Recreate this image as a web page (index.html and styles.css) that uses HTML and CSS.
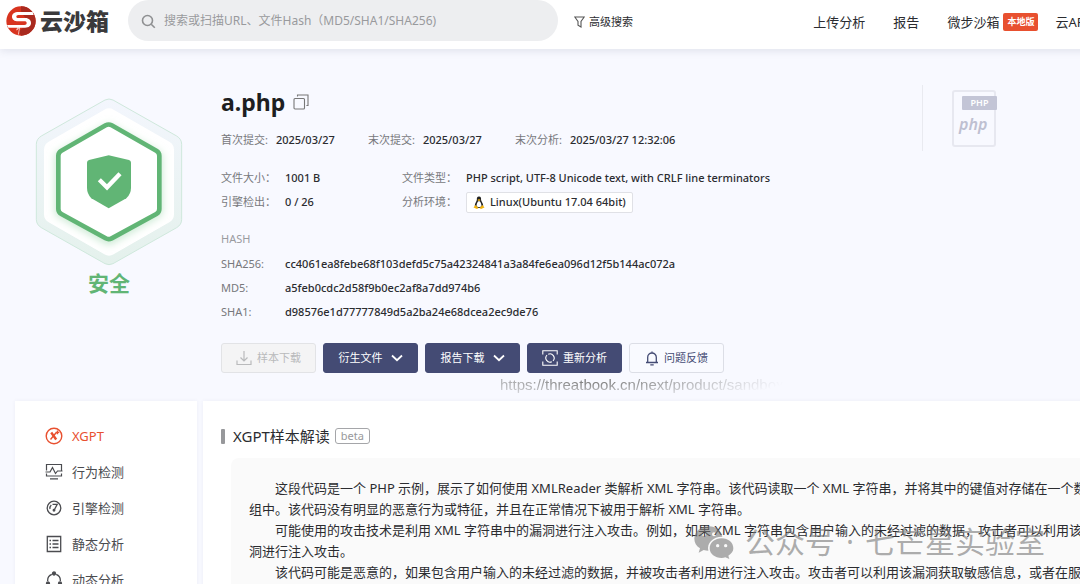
FILE: index.html
```html
<!DOCTYPE html>
<html lang="zh-CN">
<head>
  <meta charset="UTF-8" />
  <meta name="viewport" content="width=device-width, initial-scale=1.0"/>
  <title>a.php - 云沙箱</title>
  <link rel="stylesheet" href="styles.css">
</head>
<body>
  <div class="page">
    <header class="header">
      <a class="logo" href="#">
        <svg width="30" height="30" viewBox="0 0 90 90">
          <circle cx="45" cy="45" r="44" fill="#d8341f"/>
          <path d="M45 1a44 44 0 0 1 0 88l-6-14 20-16 8-14-14-16-8-14z" fill="#a92a1f"/>
          <path d="M80 18H38c-13 0-20 6-20 14s7 14 19 14h18c5 0 7 2 7 5s-2 6-7 6H3l4 8h50c12 0 18-6 18-14s-6-15-17-15H37c-4 0-6-2-6-4s2-5 6-5h46z" fill="#fff"/>
          <path d="M38 59l-6 13 9-8-4 22" fill="none" stroke="#fff" stroke-width="2"/>
        </svg>
        <span>云沙箱</span>
      </a>
      <form class="search">
        <svg width="15" height="15" viewBox="0 0 15 15" fill="none" stroke="#8f9092" stroke-width="1.6">
          <circle cx="6.500" cy="6.500" r="5"/><path d="M10.200 10.200l3.600 3.600"/>
        </svg>
        <input type="text" aria-label="搜索" placeholder="搜索或扫描URL、文件Hash（MD5/SHA1/SHA256)">
      </form>
      <a class="advanced" href="#">
        <svg width="11" height="12" viewBox="0 0 11 12" fill="none" stroke="#555" stroke-width="1.1">
          <path d="M.8 1h9.400L7 5.400V11L4 9.200V5.400z"/>
        </svg>
        高级搜索
      </a>
      <nav class="nav">
        <a href="#">上传分析</a>
        <a href="#">报告</a>
        <a href="#">微步沙箱<span class="tag">本地版</span></a>
        <a class="nav-api" href="#">云API</a>
      </nav>
    </header>

    <section class="summary">
      <div class="verdict">
        <svg width="178" height="185" viewBox="0 0 534 555">
          <defs>
            <linearGradient id="ring" x1="0" y1="0" x2="0" y2="1">
              <stop offset="0" stop-color="#f3f6fd"/><stop offset="1" stop-color="#e4f1ec"/>
            </linearGradient>
            <filter id="blur" x="-20%" y="-20%" width="140%" height="140%"><feGaussianBlur stdDeviation="13"/></filter>
          </defs>
          <path d="M255 45q12-6 24 0l191 108q15 9 15 25v225q0 16-15 25L279 536q-12 6-24 0L64 428q-15-9-15-25V178q0-16 15-25z" fill="url(#ring)" stroke="#cfe8dc" stroke-width="3"/>
          <path d="M253 74q14-8 28 0l167 96q14 8 14 24v194q0 16-14 24l-167 96q-14 8-28 0L86 412q-14-8-14-24V194q0-16 14-24z" fill="#fff"/>
          <path d="M266 130l148 83v170l-148 84-148-84V213z" fill="none" stroke="#b9e2c4" stroke-width="20" filter="url(#blur)"/>
          <path d="M257 121q9-5 18 0l134 76q9 5 9 15v160q0 10-9 15l-134 73q-9 5-18 0l-133-73q-9-5-9-15V212q0-10 9-15z" fill="#fff" stroke="#61b575" stroke-width="14"/>
          <path d="M266 211l61 14q6 2 6 8v75q0 18-14 32l-53 30-52-30q-13-14-13-32v-75q0-6 6-8z" fill="#61b575"/>
          <path d="M238 284l23 23 39-41" fill="none" stroke="#fff" stroke-width="13"/>
        </svg>
        <strong class="verdict-text">安全</strong>
      </div>

      <div class="info">
        <h1 class="file-name">a.php
          <button class="copy" type="button" aria-label="复制">
            <svg width="16" height="16" viewBox="0 0 16 16" fill="none" stroke="#777" stroke-width="1.1">
              <rect x="1" y="4.500" width="10.500" height="10.500" rx="1"/><path d="M4.500 2.600V1H15v10.500h-1.600"/>
            </svg>
          </button>
        </h1>
        <dl class="dates">
          <div><dt>首次提交:</dt><dd>2025/03/27</dd></div>
          <div><dt>末次提交:</dt><dd>2025/03/27</dd></div>
          <div><dt>末次分析:</dt><dd>2025/03/27 12:32:06</dd></div>
        </dl>
        <dl class="details">
          <dt>文件大小：</dt><dd>1001 B</dd>
          <dt>文件类型：</dt><dd>PHP script, UTF-8 Unicode text, with CRLF line terminators</dd>
          <dt>引擎检出：</dt><dd>0 / 26</dd>
          <dt>分析环境：</dt>
          <dd>
            <span class="env">
              <svg width="12" height="13" viewBox="0 0 24 26">
                <path d="M12 1c-4 0-4.500 3-4.300 6.500C7.500 11 3.500 14 3.500 20l4 4h9l4-4c0-6-4.200-9-4.400-12.500C16.300 4 16 1 12 1z" fill="#222"/>
                <path d="M12 10c-2.500 0-5 6-5 10 1 3 9 3 10 0 0-4-2.500-10-5-10z" fill="#fff"/>
                <path d="M9 8l3-2 3 2-3 2.500zM1 23l4-5 6 6-3 2zM23 23l-4-5-6 6 3 2z" fill="#f2b20c"/>
              </svg>
              Linux(Ubuntu 17.04 64bit)
            </span>
          </dd>
        </dl>
        <h2 class="hash-title">HASH</h2>
        <dl class="details hashes">
          <dt>SHA256:</dt><dd>cc4061ea8febe68f103defd5c75a42324841a3a84fe6ea096d12f5b144ac072a</dd>
          <dt>MD5:</dt><dd>a5feb0cdc2d58f9b0ec2af8a7dd974b6</dd>
          <dt>SHA1:</dt><dd>d98576e1d77777849d5a2ba24e68dcea2ec9de76</dd>
        </dl>
        <div class="actions">
          <button class="btn" type="button" disabled>
            <svg width="16" height="16" viewBox="0 0 16 16" fill="none" stroke="currentColor" stroke-width="1.2">
              <path d="M8 1v10M4.500 7.500L8 11l3.500-3.500M1 10.500V14.500h14v-4"/>
            </svg>
            样本下载
          </button>
          <button class="btn btn-primary" type="button">
            衍生文件
            <svg class="caret" width="12" height="8" viewBox="0 0 12 8" fill="none" stroke="currentColor" stroke-width="1.8"><path d="M1 1.500l5 4.700 5-4.700"/></svg>
          </button>
          <button class="btn btn-primary" type="button">
            报告下载
            <svg class="caret" width="12" height="8" viewBox="0 0 12 8" fill="none" stroke="currentColor" stroke-width="1.8"><path d="M1 1.500l5 4.700 5-4.700"/></svg>
          </button>
          <button class="btn btn-primary" type="button">
            <svg width="16" height="16" viewBox="0 0 16 16" fill="none" stroke="currentColor" stroke-width="1.1">
              <path d="M.8 4.500V.8h14.400v3.700M.8 11.500v3.700h14.400v-3.700"/>
              <path d="M6.200 4.200a4.200 4.200 0 0 1 4.800 6.700M9.800 11.800A4.200 4.200 0 0 1 5 5.100"/>
            </svg>
            重新分析
          </button>
          <button class="btn btn-plain" type="button">
            <svg width="14" height="15" viewBox="0 0 14 15" fill="none" stroke="currentColor" stroke-width="1.3">
              <path d="M1 11.500h12M2.700 11.500V6.300a4.300 4.300 0 0 1 8.600 0v5.200M7 .6V2M5.300 13.900h3.400"/>
            </svg>
            问题反馈
          </button>
        </div>
        <span class="link-hint">https://threatbook.cn/next/product/sandbox</span>
      </div>

      <div class="file-type">
        <div class="sheet">
          <span class="sheet-tag">PHP</span>
          <em class="sheet-name">php</em>
        </div>
      </div>
    </section>

    <div class="report">
      <aside class="sidebar">
        <a class="active" href="#">
          <svg width="18" height="18" viewBox="0 0 18 18" fill="none" stroke="currentColor" stroke-width="1.4">
            <circle cx="9" cy="9" r="7.800"/><path d="M6.200 5.500l5 7" stroke-width="2.400"/><path d="M5.500 12.500l5.800-7M12.500 3.600v3.600M10.700 5.400h3.600"/>
          </svg>
          XGPT
        </a>
        <a href="#">
          <svg width="18" height="18" viewBox="0 0 18 18" fill="none" stroke="currentColor" stroke-width="1.2">
            <path d="M1.500 7.500v-6h15v6M1.500 10.500v2.500h15v-2.500M.5 9h4.500l2.500-4.500 3 6L12.500 8h5M5 15.800h8"/>
          </svg>
          行为检测
        </a>
        <a href="#">
          <svg width="18" height="18" viewBox="0 0 18 18" fill="none" stroke="currentColor" stroke-width="1.3">
            <circle cx="9" cy="9" r="6.800"/><path d="M5 10a4.200 4.200 0 0 1 1.300-4M7.500 5.300h4.700L9.500 10.500"/><circle cx="9" cy="11.300" r=".8"/>
          </svg>
          引擎检测
        </a>
        <a href="#">
          <svg width="18" height="18" viewBox="0 0 18 18" fill="none" stroke="currentColor" stroke-width="1.3">
            <path d="M2.300 1.500h13.400v15H2.300zM4.500 5.500h1.500M7.500 5.500h6M4.500 9h1.500M7.500 9h6M4.500 12.500h1.500M7.500 12.500h6"/>
          </svg>
          静态分析
        </a>
        <a href="#">
          <svg width="18" height="18" viewBox="0 0 18 18" fill="none" stroke="currentColor" stroke-width="1.3">
            <path d="M6.800 3.300A6.600 6.600 0 0 0 2.700 10M11.200 3.300a6.600 6.600 0 0 1 4.100 6.700M5 14.800a7 7 0 0 0 8 0"/>
            <g fill="currentColor"><circle cx="9" cy="2.500" r="1.500"/><circle cx="3" cy="12.500" r="1.500"/><circle cx="15" cy="12.500" r="1.500"/></g>
          </svg>
          动态分析
        </a>
      </aside>

      <main class="content">
        <h2 class="section-title">XGPT样本解读<span class="beta">beta</span></h2>
        <div class="reading">
          <p>这段代码是一个 PHP 示例，展示了如何使用 XMLReader 类解析 XML 字符串。该代码读取一个 XML 字符串，并将其中的键值对存储在一个数组中。该代码没有明显的恶意行为或特征，并且在正常情况下被用于解析 XML 字符串。</p>
          <p>可能使用的攻击技术是利用 XML 字符串中的漏洞进行注入攻击。例如，如果 XML 字符串包含用户输入的未经过滤的数据，攻击者可以利用该漏洞进行注入攻击。</p>
          <p>该代码可能是恶意的，如果包含用户输入的未经过滤的数据，并被攻击者利用进行注入攻击。攻击者可以利用该漏洞获取敏感信息，或者在服务器上执行任意代码。</p>
          <div class="watermark">
            <svg width="40" height="34" viewBox="0 0 120 102" fill="currentColor">
              <path fill-rule="evenodd" d="M45 4C20 4 1 20 1 41c0 12 6 22 17 29l-4 13 15-8q7 2 14 2c-5-23 13-42 42-42C81 16 65 4 45 4zM30 22a6 6 0 1 1 0 12 6 6 0 0 1 0-12zm30 0a6 6 0 1 1 0 12 6 6 0 0 1 0-12z"/>
              <path fill-rule="evenodd" d="M83 40c-20 0-36 13-36 30s16 29 36 29q6 0 11-2l12 5-3-10c10-6 15-13 15-22 0-17-15-30-35-30zM71 57a5 5 0 1 1 0 10 5 5 0 0 1 0-10zm24 0a5 5 0 1 1 0 10 5 5 0 0 1 0-10z"/>
            </svg>
            <span>公众号</span><span>·</span><span>七芒星实验室</span>
          </div>
        </div>
      </main>
    </div>
  </div>
</body>
</html>
```
FILE: styles.css
```css
:root {
  --navy: #444b74;
  --accent: #e8502f;
  --green: #61b575;
  --bg: #f8f9ff;
  --text: #2b2c30;
  --muted: #77787c;
}

* {
  box-sizing: border-box;
}

html {
  overflow: hidden;
}

body {
  margin: 0;
  font-family: "Noto Sans", "Noto Sans CJK SC", sans-serif;
  font-size: 11px;
  line-height: 16px;
  background: var(--bg);
  color: var(--text);
}

h1, h2, p, dl, dd {
  margin: 0;
}

a {
  color: inherit;
  text-decoration: none;
}

button, input {
  font: inherit;
  color: inherit;
}

svg {
  flex: none;
}

.page {
  min-width: 1140px;
}

/* header */
.header {
  display: flex;
  align-items: center;
  height: 49px;
  padding: 0 51px 8px 6px;
  background: #fff;
  box-shadow: 0 2px 8px rgba(60, 65, 100, 0.12);
}

.logo {
  display: flex;
  align-items: center;
  gap: 4px;
  width: 122px;
  font-size: 23px;
  font-weight: 900;
  line-height: 30px;
  color: #3a3a3c;
}

.search {
  display: flex;
  align-items: center;
  gap: 8px;
  width: 430px;
  height: 41px;
  padding: 1px 13px 0;
  border-radius: 21px;
  background: #edeef0;
}

.search input {
  flex: 1;
  padding: 0;
  border: none;
  outline: none;
  background: none;
  font-size: 12px;
}

.search input::placeholder {
  color: #999a9d;
}

.advanced {
  display: flex;
  align-items: center;
  gap: 4px;
  margin-left: 16px;
  padding-top: 2px;
}

.nav {
  display: flex;
  gap: 28px;
  margin-left: auto;
  padding-top: 2px;
  font-size: 13px;
  line-height: 20px;
}

.nav a {
  display: flex;
  align-items: center;
  gap: 4px;
}

.nav .nav-api {
  margin-left: -11px;
}

.tag {
  padding: 0 4px;
  border-radius: 2px;
  background: var(--accent);
  color: #fff;
  font-size: 9px;
  font-weight: 700;
  line-height: 18px;
}

/* summary */
.summary {
  display: flex;
  padding: 36px 0 8px 20px;
}

.verdict {
  display: flex;
  flex-direction: column;
  align-items: center;
  width: 178px;
  margin-right: 23px;
}

.verdict-text {
  font-size: 21px;
  line-height: 26px;
  color: var(--green);
}

.info {
  flex: 1;
}

.file-name {
  display: flex;
  align-items: center;
  gap: 8px;
  font-size: 23px;
  line-height: 34px;
  color: #1d1e21;
}

.copy {
  display: flex;
  padding: 0;
  border: none;
  background: none;
}

.dates {
  display: grid;
  grid-template-columns: 147px 147px auto;
  margin-top: 13px;
}

.dates div {
  display: flex;
  gap: 8px;
}

dt {
  color: var(--muted);
}

dd {
  font-weight: 500;
}

.details {
  display: grid;
  grid-template-columns: 64px 117px 64px auto;
  align-items: center;
  grid-auto-rows: 24px;
  margin-top: 18px;
}

.env {
  display: inline-flex;
  align-items: center;
  gap: 5px;
  height: 21px;
  padding: 0 6px;
  border: 1px solid #e0e1e6;
  border-radius: 2px;
  background: #fff;
  vertical-align: middle;
}

.hash-title {
  margin-top: 17px;
  font-size: 11px;
  font-weight: 400;
  color: #9a9b9f;
}

.hashes {
  grid-template-columns: 64px auto;
  margin-top: 5px;
}

.actions {
  display: flex;
  gap: 7px;
  margin-top: 19px;
}

.btn {
  display: flex;
  align-items: center;
  justify-content: center;
  gap: 5px;
  width: 95px;
  height: 30px;
  padding: 0;
  border: 1px solid #e2e3e6;
  border-radius: 3px;
  background: #f4f4f5;
}

.btn:disabled {
  color: #b9babc;
}

.btn-primary {
  border-color: var(--navy);
  background: var(--navy);
  color: #fff;
}

.btn-plain {
  border-color: #dcdee6;
  background: #f9faff;
  color: var(--navy);
}

.caret {
  margin-left: 3px;
}

/* the address fades out towards its ends and its lower edge */
.link-hint {
  display: block;
  width: 290px;
  height: 20px;
  margin-left: 279px;
  overflow: hidden;
  font-family: "Liberation Sans", sans-serif;
  font-size: 15px;
  line-height: 24px;
  color: #777;
  mask-image: radial-gradient(ellipse 190px 20px at 95px 8px, #000, transparent);
}

.file-type {
  width: 218px;
  height: 66px;
  padding: 5px 0 0 29px;
  border-left: 1px solid #e9eaf0;
}

.sheet {
  display: flex;
  flex-direction: column;
  width: 44px;
  height: 57px;
  padding-top: 4px;
  border: 2px solid #e7e8f0;
  border-radius: 3px;
}

.sheet-tag {
  align-self: flex-end;
  width: 35px;
  margin-right: -3px;
  border-radius: 1px;
  background: #c3c5d6;
  color: #fff;
  font-size: 9px;
  font-weight: 600;
  line-height: 14px;
  text-align: center;
}

.sheet-name {
  padding-left: 5px;
  font-size: 16px;
  font-weight: 600;
  line-height: 28px;
  color: #bec0d1;
}

/* report */
.report {
  display: flex;
  gap: 6px;
  padding-left: 15px;
}

.sidebar,
.content {
  background: #fff;
  box-shadow: 0 0 4px rgba(60, 65, 100, 0.06);
}

.sidebar {
  flex: none;
  width: 182px;
  padding: 17px 0 0 30px;
}

.sidebar a {
  display: flex;
  align-items: center;
  gap: 9px;
  height: 36px;
  font-size: 13px;
  color: #4b4c50;
}

.sidebar .active {
  color: var(--accent);
}

.content {
  flex: 1;
  padding: 24px 0 24px 18px;
}

.section-title {
  display: flex;
  align-items: center;
  font-size: 15px;
  font-weight: 400;
  line-height: 22px;
}

.section-title::before {
  content: "";
  width: 4px;
  height: 15px;
  margin-right: 8px;
  border-radius: 1px;
  background: #97989b;
}

.beta {
  margin-left: 5px;
  padding: 0 5px;
  border: 1px solid #a5a6a9;
  border-radius: 3px;
  color: #98999c;
  font-size: 11px;
  line-height: 14px;
}

.reading {
  position: relative;
  margin: 11px 10px 0;
  padding: 20px 33px 20px 18px;
  border-radius: 8px;
  background: #fafafa;
  font-size: 13px;
  line-height: 21px;
}

.reading p {
  text-indent: 26px;
}

.watermark {
  position: absolute;
  top: 66px;
  left: 463px;
  display: flex;
  align-items: center;
  gap: 11px;
  color: rgba(120, 120, 120, 0.6);
  font-size: 30px;
  line-height: 36px;
  white-space: nowrap;
}
```
